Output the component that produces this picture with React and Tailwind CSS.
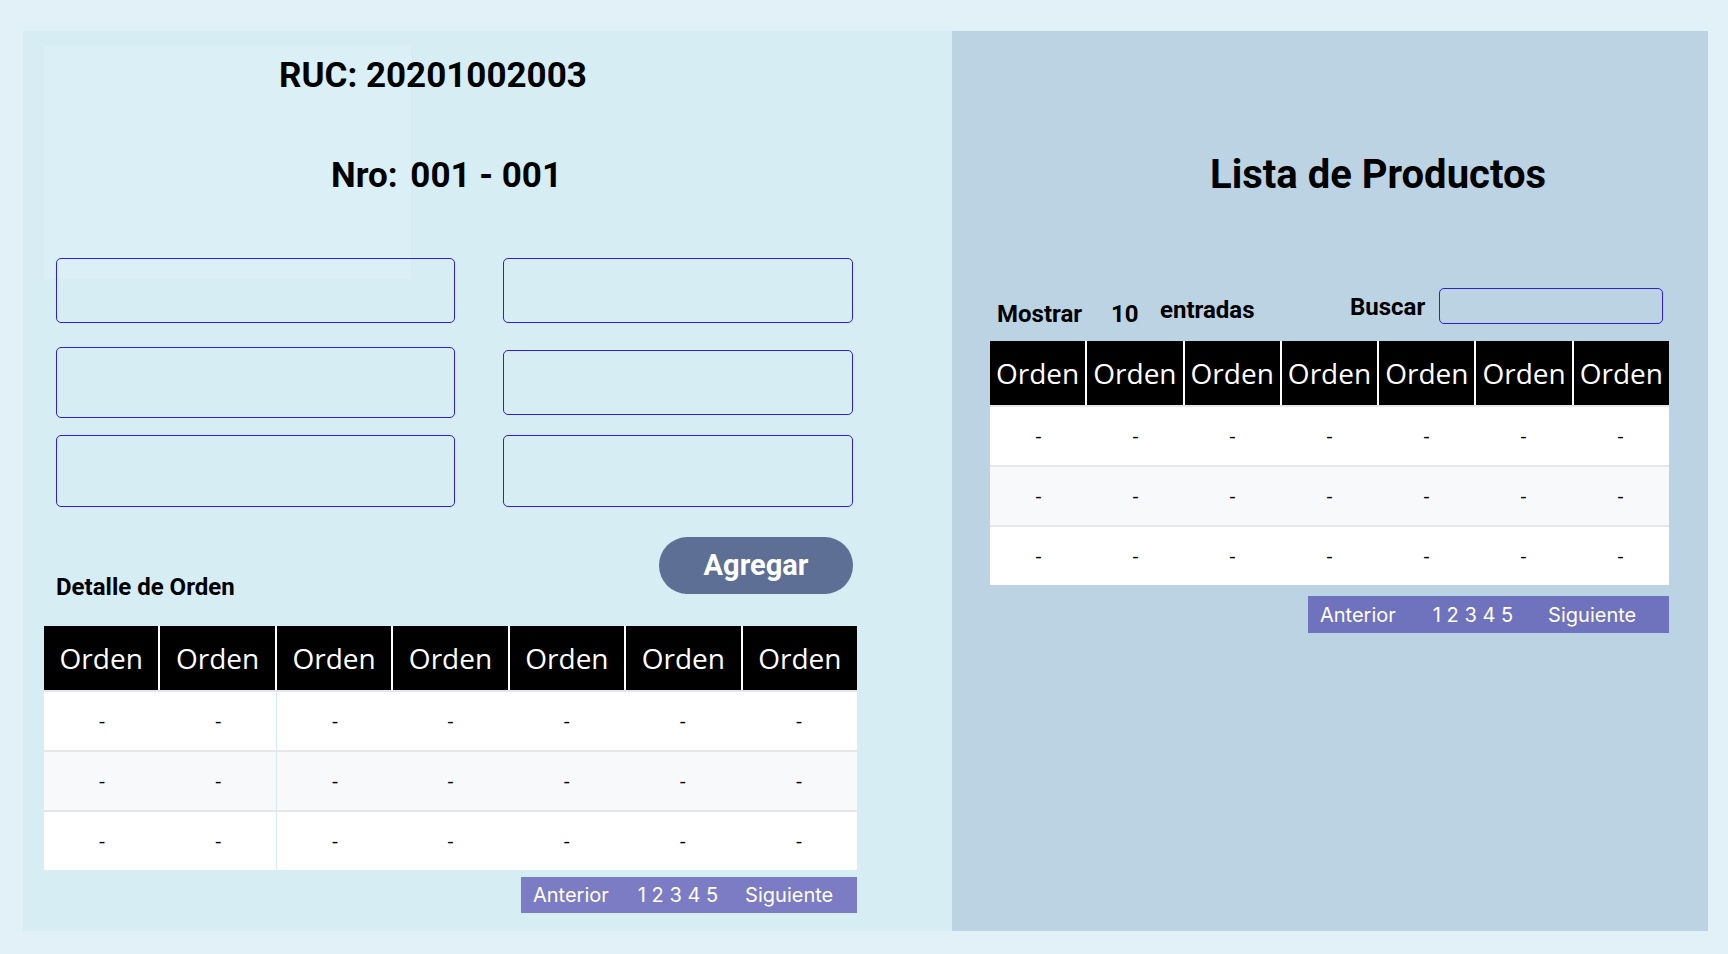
import React from "react";

const heading = { fontFamily: "Roboto, 'Liberation Sans', sans-serif" };
const tableFont = { fontFamily: "'Open Sans', 'Noto Sans', sans-serif" };
const pagFont = { fontFamily: "Inter, 'Liberation Sans', sans-serif" };

function DataTable({ width, divider }) {
  const cols = [0, 1, 2, 3, 4, 5, 6];
  const rows = ["bg-white", "bg-[#f7f9fb]", "bg-white"];
  return (
    <div className={`${width} flex flex-col`} style={tableFont}>
      <div className="grid grid-cols-7 gap-x-[2px] bg-white">
        {cols.map((c) => (
          <div
            key={c}
            className="h-[64px] bg-black text-white text-[28px] flex items-center justify-center whitespace-nowrap leading-none"
          >
            Orden
          </div>
        ))}
      </div>
      {rows.map((bg, r) => (
        <div key={r} className={`grid grid-cols-7 h-[60px] border-t-2 border-[#e5e7eb] ${bg}`}>
          {cols.map((c) => (
            <div
              key={c}
              className={`flex items-center justify-center text-[20px] text-black ${
                divider && c === 2 ? "border-l border-[#d3ebf3]" : ""
              }`}
            >
              -
            </div>
          ))}
        </div>
      ))}
    </div>
  );
}

function Pagination({ className, pl, gap1, gap2 }) {
  return (
    <div className={`flex items-center text-white text-[20px] ${className}`} style={pagFont}>
      <span className={pl}>Anterior</span>
      <span className={gap1}>1 2 3 4 5</span>
      <span className={gap2}>Siguiente</span>
    </div>
  );
}

export default function App() {
  return (
    <div className="w-[1728px] h-[954px] bg-[#e2f0f8] pt-[31px] pl-[23px] flex items-start overflow-hidden">
      {/* Left panel */}
      <div className="relative w-[929px] h-[900px] bg-[#d5edf3]">
        <div className="absolute left-[21px] top-[15px] w-[367px] h-[233px] bg-[#daeff6]" />
        <div className="relative flex flex-col" style={heading}>
          <h1 className="ml-[256px] mt-[25px] leading-[40px] text-[35px] font-bold text-black whitespace-nowrap">
            RUC: 20201002003
          </h1>
          <h2 className="ml-[308px] mt-[60px] leading-[40px] text-[35px] font-bold text-black whitespace-nowrap">
            Nro: <span className="ml-[4px]">001 - 001</span>
          </h2>

          <div className="ml-[33px] mt-[62px] flex flex-col">
            <div className="flex gap-x-[48px] h-[65px]">
              <input className="w-[399px] h-[65px] border border-[#2e1ee0] rounded-[5px] bg-transparent outline-none" />
              <input className="w-[350px] h-[65px] border border-[#2e1ee0] rounded-[5px] bg-transparent outline-none" />
            </div>
            <div className="flex gap-x-[48px] h-[71px] mt-[24px] items-center">
              <input className="w-[399px] h-[71px] border border-[#2e1ee0] rounded-[5px] bg-transparent outline-none" />
              <input className="w-[350px] h-[65px] border border-[#2e1ee0] rounded-[5px] bg-transparent outline-none" />
            </div>
            <div className="flex gap-x-[48px] h-[72px] mt-[17px]">
              <input className="w-[399px] h-[72px] border border-[#2e1ee0] rounded-[5px] bg-transparent outline-none" />
              <input className="w-[350px] h-[72px] border border-[#2e1ee0] rounded-[5px] bg-transparent outline-none" />
            </div>
          </div>

          <div className="ml-[33px] mt-[30px] w-[797px] h-[57px] flex justify-between items-start">
            <span className="mt-[36px] leading-[28px] text-[24px] font-bold text-black">Detalle de Orden</span>
            <button className="w-[194px] h-[57px] rounded-full bg-[#5d6f95] text-white text-[29px] font-bold leading-none">
              Agregar
            </button>
          </div>

          <div className="ml-[21px] mt-[32px]">
            <DataTable width="w-[813px]" divider />
          </div>
          <div className="ml-[21px] w-[813px] mt-[7px] flex justify-end">
            <Pagination
              className="w-[336px] h-[36px] bg-[#7b7cc4]"
              pl="ml-[12px]"
              gap1="ml-[29px]"
              gap2="ml-[27px]"
            />
          </div>
        </div>
      </div>

      {/* Right panel */}
      <div className="w-[756px] h-[900px] bg-[#bbd3e2] flex flex-col" style={heading}>
        <h1 className="ml-[258px] mt-[120px] leading-[47px] text-[40px] font-bold text-black whitespace-nowrap">
          Lista de Productos
        </h1>
        <div className="ml-[45px] mt-[90px] flex items-start h-[36px] text-[24px] font-bold text-black leading-[28px] whitespace-nowrap">
          <span className="mt-[12px] w-[83px]">Mostrar</span>
          <span className="mt-[12px] ml-[31px] w-[25px]">10</span>
          <span className="mt-[8px] ml-[24px] w-[93px]">entradas</span>
          <span className="mt-[5px] ml-[97px] w-[73px]">Buscar</span>
          <input className="ml-[16px] w-[224px] h-[36px] border border-[#2e1ee0] rounded-[5px] bg-transparent outline-none" />
        </div>
        <div className="ml-[38px] mt-[17px]">
          <DataTable width="w-[679px]" />
        </div>
        <div className="ml-[38px] w-[679px] mt-[11px] flex justify-end">
          <Pagination
            className="w-[361px] h-[37px] bg-[#6f72bc]"
            pl="ml-[12px]"
            gap1="ml-[37px]"
            gap2="ml-[35px]"
          />
        </div>
      </div>
    </div>
  );
}
